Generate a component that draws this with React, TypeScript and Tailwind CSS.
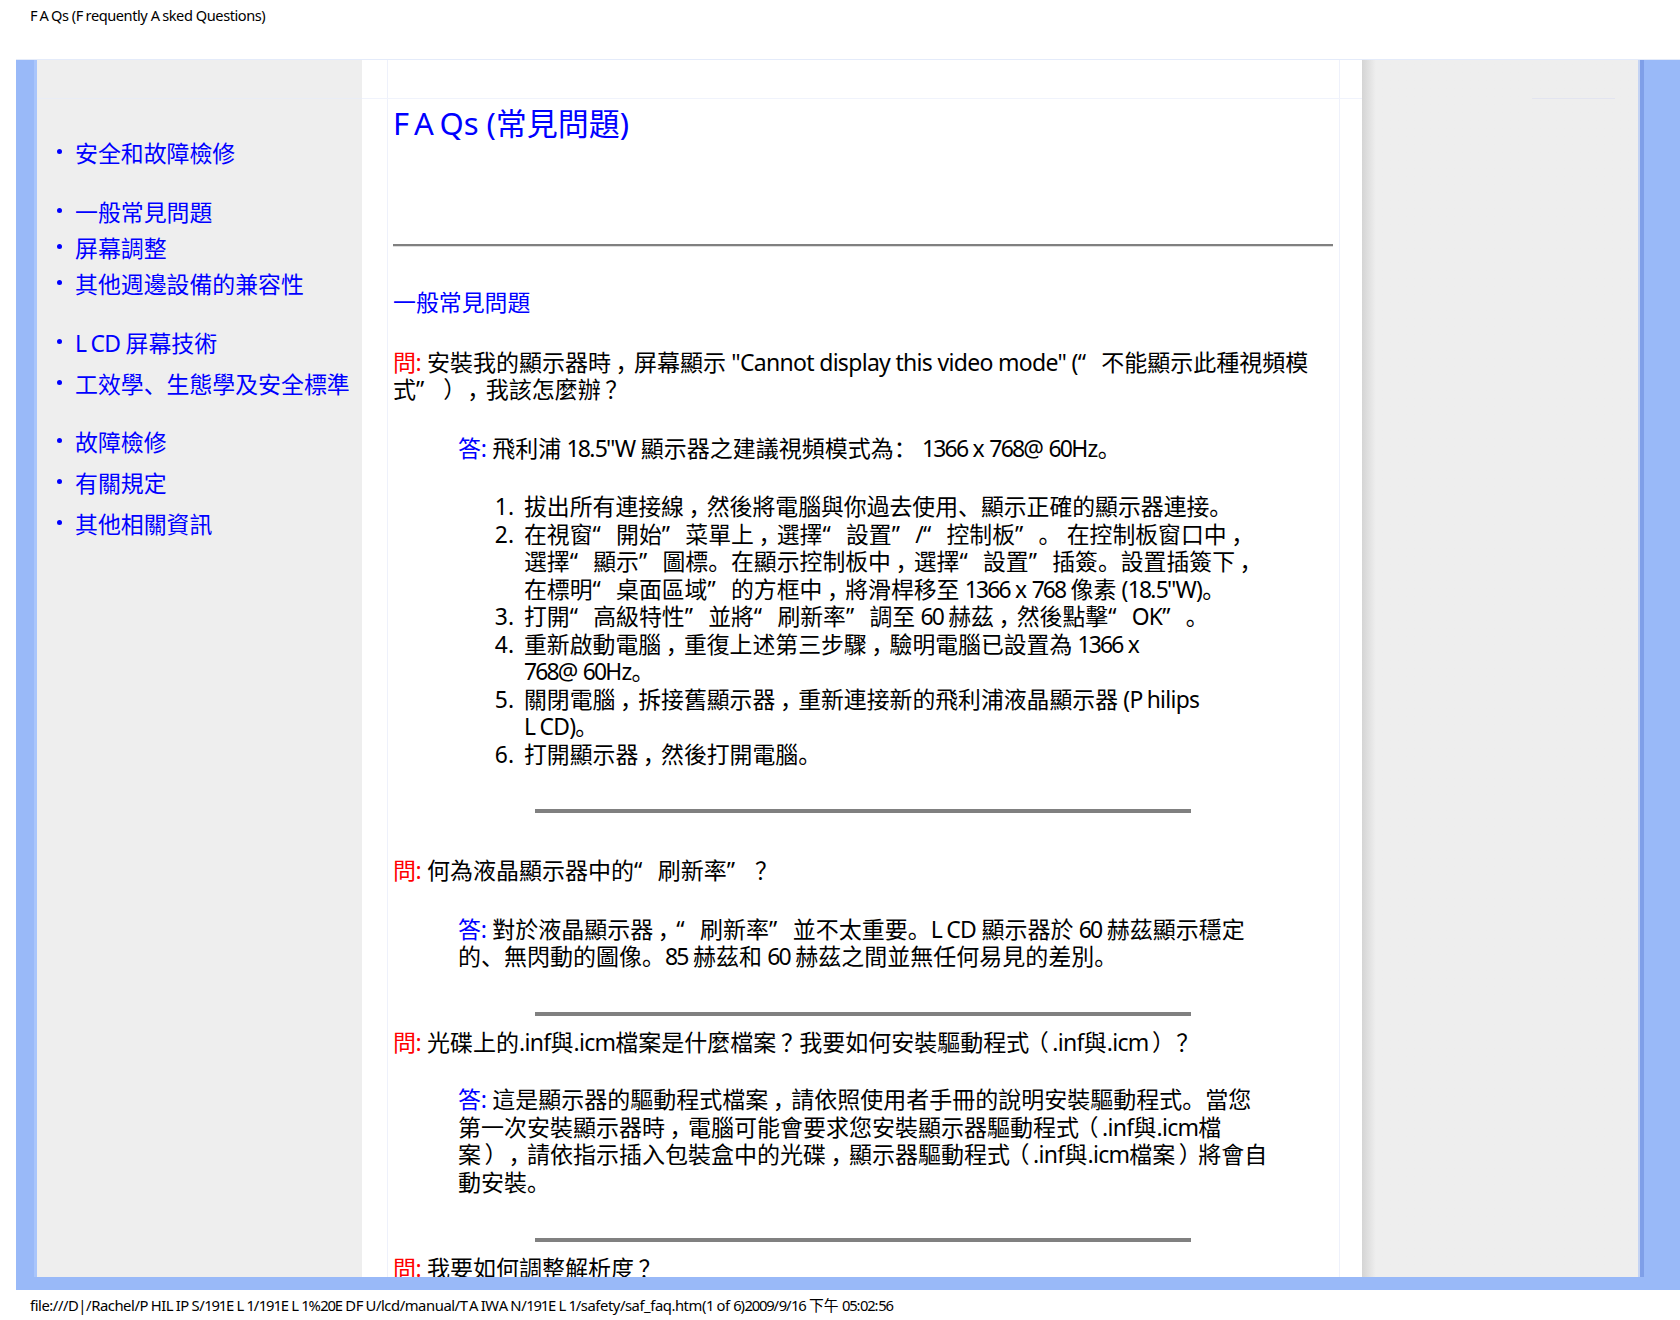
import { ReactNode } from "react";

const tokens = /\n|[“”\uFF0C\uFF1F\uFF08\uFF09]|[FALEPT]|[0-9]+|[\x20-\x7e]+?(?=[FALEPT0-9“”\n]|[^\x20-\x7e]|$)|[^\x20-\x7e“”\uFF0C\uFF1F\uFF08\uFF09\n]+/g;

const T = ({ s }: { s: string }) => (
  <>
    {(s.match(tokens) ?? []).map((t, i) => {
      if (t === "\n") return <br key={i} />;
      if (t === "“" || t === "”") return <span key={i} className="inline-block w-[1.03em]">{t}</span>;
      if (t === "\uFF0C" || t === "\uFF1F") return <span key={i} className="inline-block w-[1em] translate-x-[0.2em]">{t}</span>;
      if (t === "\uFF08") return <span key={i} className="inline-block w-[1em] -translate-x-[0.15em]">{t}</span>;
      if (t === "\uFF09") return <span key={i} className="inline-block w-[1em] translate-x-[0.15em]">{t}</span>;
      if (/^[FALEPT]$/.test(t)) return <span key={i} className="tracking-[0.15em]">{t}</span>;
      if (/^[0-9]+$/.test(t)) return <span key={i} className="tracking-[-0.08em]">{t}</span>;
      if (/^[\x20-\x7e]/.test(t)) return <span key={i} className="tracking-[-0.03em]">{t}</span>;
      return <span key={i}>{t}</span>;
    })}
  </>
);

const Hr = () => <div className="mx-[142px] h-[4px] bg-[#808080]" />;

const Q = ({ s, className }: { s: string; className: string }) => (
  <p className={"m-0 whitespace-nowrap " + className}>
    <span className="tracking-[-0.4px] text-[#ff0000]">問: </span>
    <T s={s} />
  </p>
);

const A = ({ s, className }: { s: string; className: string }) => (
  <p className={"m-0 ml-[65px] whitespace-nowrap " + className}>
    <span className="tracking-[-0.3px] text-[#0000ff]">答: </span>
    <T s={s} />
  </p>
);

const NavItem = ({ label, className }: { label: string; className: string }) => (
  <li className={"flex items-start gap-[13px] text-[#0000ff] " + className}>
    <span className="mt-[9px] h-[5px] w-[5px] shrink-0 rounded-full bg-[#0000ff]" />
    <span className="whitespace-nowrap"><T s={label} /></span>
  </li>
);

const steps: string[] = [
  "拔出所有連接線\uFF0C然後將電腦與你過去使用、顯示正確的顯示器連接。",
  "在視窗“開始”菜單上\uFF0C選擇“設置”/“控制板”。 在控制板窗口中\uFF0C\n選擇“顯示”圖標。在顯示控制板中\uFF0C選擇“設置”插簽。設置插簽下\uFF0C\n在標明“桌面區域”的方框中\uFF0C將滑桿移至 1366 x 768 像素 (18.5\"W)。",
  "打開“高級特性”並將“刷新率”調至 60 赫茲\uFF0C然後點擊“OK”。",
  "重新啟動電腦\uFF0C重復上述第三步驟\uFF0C驗明電腦已設置為 1366 x\n768@ 60Hz。",
  "關閉電腦\uFF0C拆接舊顯示器\uFF0C重新連接新的飛利浦液晶顯示器 (Philips\nLCD)。",
  "打開顯示器\uFF0C然後打開電腦。",
];

export default function App(): ReactNode {
  return (
    <div className="flex h-[1320px] w-[1680px] flex-col overflow-hidden bg-white font-['Noto_Sans','Noto_Sans_CJK_SC',sans-serif] text-black">
      <header className="h-[59px] shrink-0 pl-[30px] pt-[5px] text-[14.6px] leading-[21px]">
        <T s="FAQs (Frequently Asked Questions)" />
      </header>

      <div className="ml-[16px] flex h-[1231px] shrink-0 flex-col bg-[#99b9f8]">
        <div className="flex h-[1218px] shrink-0 border-t border-[#e4ebfa]">
          {/* left blue band */}
          <div className="flex w-[21px] shrink-0 justify-end">
            <div className="w-[3px] bg-[#a9c5fb]" />
          </div>

          {/* sidebar */}
          <aside className="w-[325px] shrink-0 bg-[#eeeeee] text-[22.9px] leading-[27.5px]">
            <div className="h-[39px] border-b border-[#e9edf6]" />
            <ul className="m-0 list-none pl-[20px] pt-[41px]">
              <NavItem label="安全和故障檢修" className="" />
              <NavItem label="一般常見問題" className="mt-[31.5px]" />
              <NavItem label="屏幕調整" className="mt-[8.5px]" />
              <NavItem label="其他週邊設備的兼容性" className="mt-[8.5px]" />
              <NavItem label="LCD 屏幕技術" className="mt-[31.5px]" />
              <NavItem label="工效學、生態學及安全標準" className="mt-[13.5px]" />
              <NavItem label="故障檢修" className="mt-[30.5px]" />
              <NavItem label="有關規定" className="mt-[13.5px]" />
              <NavItem label="其他相關資訊" className="mt-[13px]" />
            </ul>
          </aside>

          {/* main */}
          <main className="w-[1000px] shrink-0 overflow-hidden bg-white pl-[25px] pr-[22px] text-[23px] leading-[27.5px]">
            <div className="h-full border-x border-[#eef1fb]">
              <div className="-ml-[26px] -mr-[23px] h-[39px] border-b border-[#f0f3fc]" />
              <div className="pl-[5px] pr-[6px]">
                <h1 className="m-0 mt-[3.5px] text-[31px] font-normal leading-[40px] text-[#0000ff]">
                  <span className="tracking-[0.18em]">FA</span>Qs (常見問題)
                </h1>
                <div className="mt-[101px] h-[3px] border-b border-[#dddddd] bg-[#808080]" />
                <h2 className="m-0 mt-[42px] text-[22.9px] font-normal leading-[27.5px] text-[#0000ff]">一般常見問題</h2>

                <Q className="mt-[32.5px]" s={'安裝我的顯示器時\uFF0C屏幕顯示 "Cannot display this video mode" (“不能顯示此種視頻模\n式”\uFF09\uFF0C我該怎麼辦\uFF1F'} />
                <A className="mt-[31px]" s={'飛利浦 18.5"W 顯示器之建議視頻模式為\uFF1A 1366 x 768@ 60Hz。'} />

                <ol className="m-0 mt-[31px] list-none p-0 text-[22.85px]">
                  {steps.map((s, i) => (
                    <li key={i} className="flex whitespace-nowrap">
                      <span className="w-[131px] shrink-0 pr-[10px] text-right">{i + 1}.</span>
                      <span><T s={s} /></span>
                    </li>
                  ))}
                </ol>

                <div className="mt-[41px]"><Hr /></div>
                <Q className="mt-[44px]" s={"何為液晶顯示器中的“刷新率”\uFF1F"} />
                <A className="mt-[31px]" s={"對於液晶顯示器\uFF0C“刷新率”並不太重要。LCD 顯示器於 60 赫茲顯示穩定\n的、無閃動的圖像。85 赫茲和 60 赫茲之間並無任何易見的差別。"} />
                <div className="mt-[41px]"><Hr /></div>
                <Q className="mt-[13px]" s={"光碟上的.inf與.icm檔案是什麼檔案\uFF1F我要如何安裝驅動程式\uFF08.inf與.icm\uFF09\uFF1F"} />
                <A className="mt-[30px]" s={"這是顯示器的驅動程式檔案\uFF0C請依照使用者手冊的說明安裝驅動程式。當您\n第一次安裝顯示器時\uFF0C電腦可能會要求您安裝顯示器驅動程式\uFF08.inf與.icm檔\n案\uFF09\uFF0C請依指示插入包裝盒中的光碟\uFF0C顯示器驅動程式\uFF08.inf與.icm檔案\uFF09將會自\n動安裝。"} />
                <div className="mt-[42px]"><Hr /></div>
                <Q className="mt-[13px]" s={"我要如何調整解析度\uFF1F"} />
              </div>
            </div>
          </main>

          {/* right gray */}
          <div className="w-[276px] shrink-0 bg-gradient-to-r from-[#d4d4d4] from-0% via-[#eeeeee] via-[5%] to-[#eeeeee]">
            <div className="ml-[170px] mr-[23px] h-[39px] border-b border-[#e2e4f0]" />
          </div>

          {/* right strip */}
          <div className="flex w-[6px] shrink-0">
            <div className="w-[2px] bg-[#c4d3f3]" />
            <div className="w-[4px] bg-[#7f9fe8]" />
          </div>
        </div>
      </div>

      <footer className="pl-[30px] pt-[5px] text-[14.8px] leading-[21px]">
        <T s="file:///D|/Rachel/PHILIPS/191EL1/191EL1%20EDFU/lcd/manual/TAIWAN/191EL1/safety/saf_faq.htm(1 of 6)2009/9/16 下午 05:02:56" />
      </footer>
    </div>
  );
}
